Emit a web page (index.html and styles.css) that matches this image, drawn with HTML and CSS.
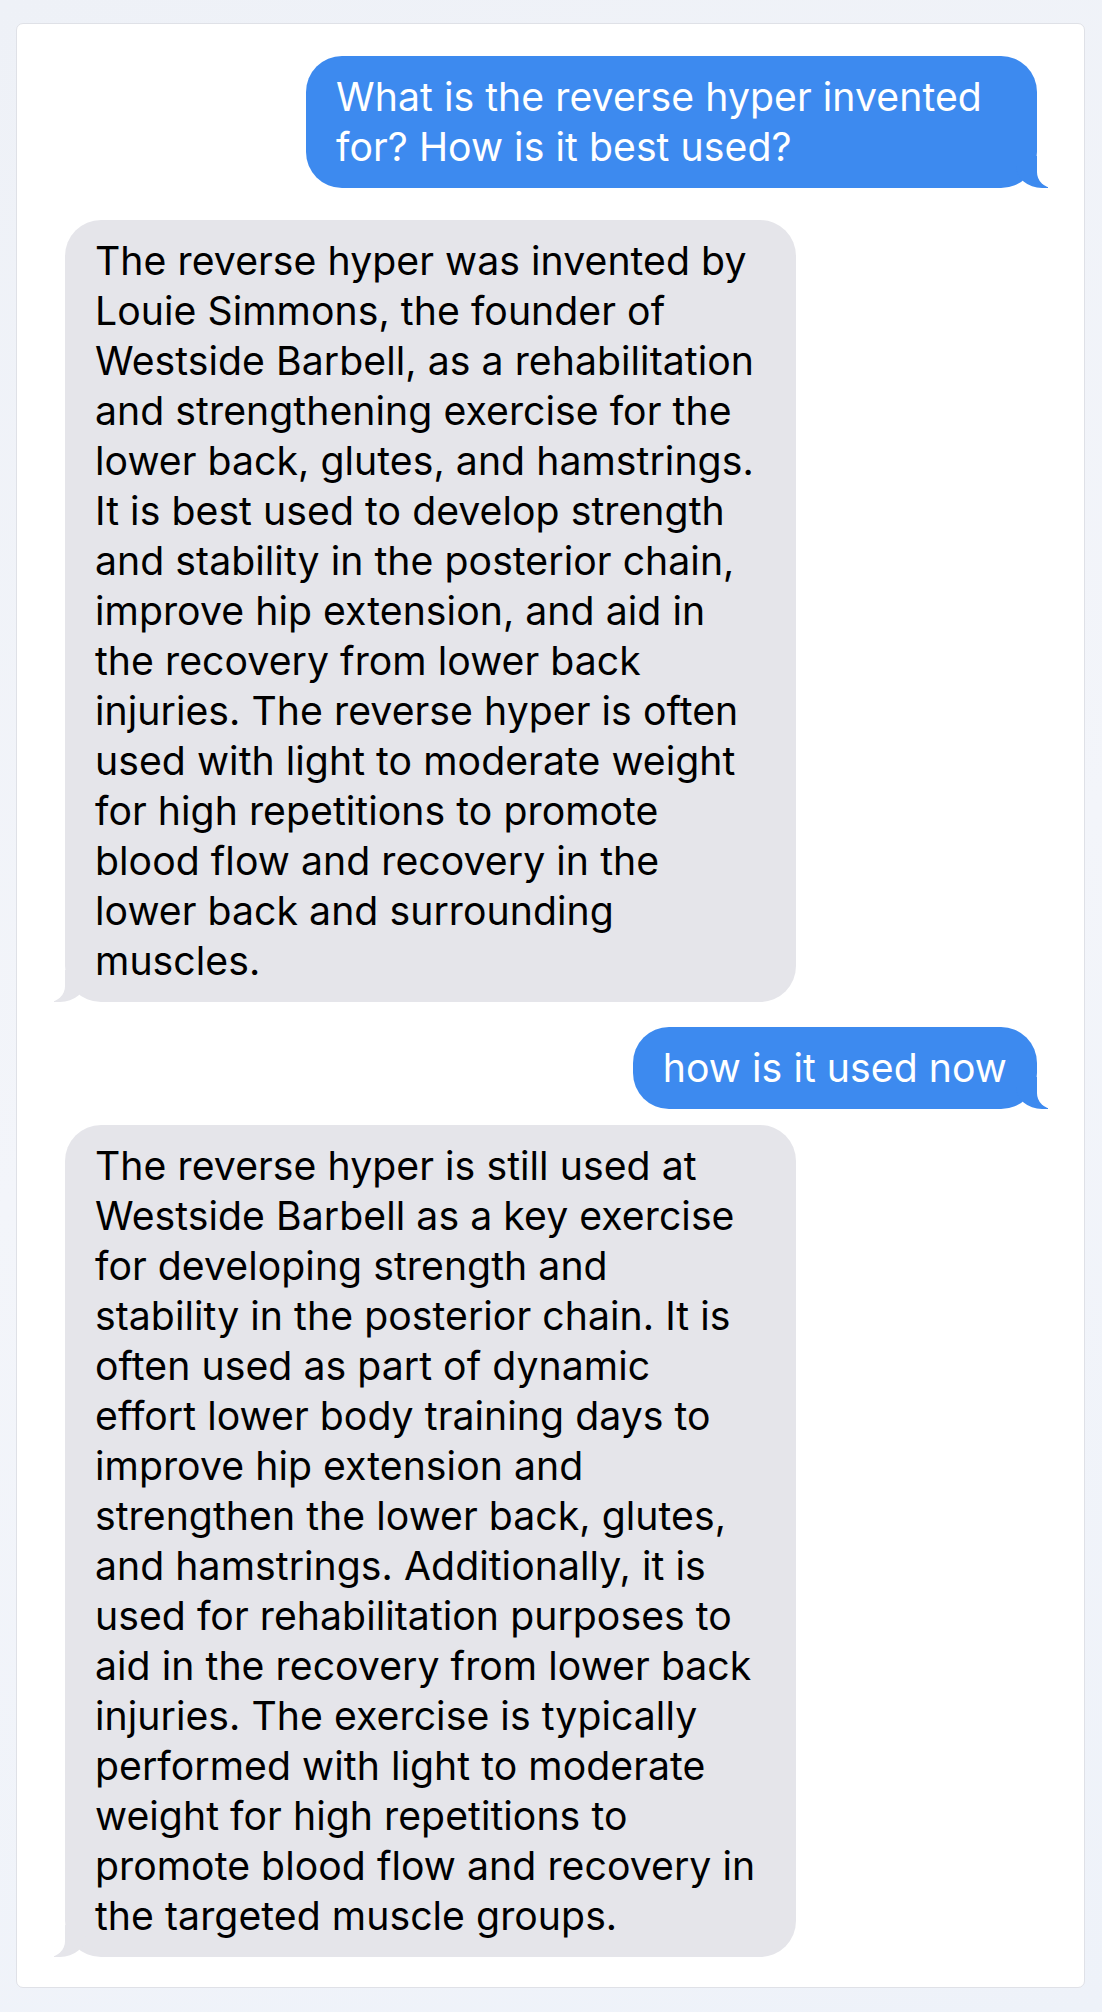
FILE: index.html
```html
<!DOCTYPE html>
<html lang="en">
<head>
<meta charset="utf-8">
<title>Chat</title>
<link rel="stylesheet" href="styles.css">
</head>
<body>
<div class="card">
  <div class="row row-me first">
    <div class="bubble me">What is the reverse hyper invented for? How is it best used?</div>
  </div>
  <div class="row row-them gap-a">
    <div class="bubble them">The reverse hyper was invented by Louie Simmons, the founder of Westside Barbell, as a rehabilitation and strengthening exercise for the lower back, glutes, and hamstrings. It is best used to develop strength and stability in the posterior chain, improve hip extension, and aid in the recovery from lower back injuries. The reverse hyper is often used with light to moderate weight for high repetitions to promote blood flow and recovery in the lower back and surrounding muscles.</div>
  </div>
  <div class="row row-me gap-b">
    <div class="bubble me">how is it used now</div>
  </div>
  <div class="row row-them gap-c">
    <div class="bubble them">The reverse hyper is still used at Westside Barbell as a key exercise for developing strength and stability in the posterior chain. It is often used as part of dynamic effort lower body training days to improve hip extension and strengthen the lower back, glutes, and hamstrings. Additionally, it is used for rehabilitation purposes to aid in the recovery from lower back injuries. The exercise is typically performed with light to moderate weight for high repetitions to promote blood flow and recovery in the targeted muscle groups.</div>
  </div>
</div>
</body>
</html>
```

FILE: styles.css
```css
html, body {
  margin: 0;
  padding: 0;
}
body {
  min-height: 2012px;
  background: linear-gradient(160deg, #eef1f7 0%, #f3f5fa 50%, #eef2f9 100%);
  font-family: Inter, "Noto Sans", sans-serif;
  padding: 23px 17px 0 16px;
  box-sizing: border-box;
}
.card {
  background: #ffffff;
  border: 1px solid #dfe1e7;
  border-radius: 7px;
  padding: 32px 47px 30px 48px;
  display: flex;
  flex-direction: column;
}
.row {
  display: flex;
}
.row-me {
  justify-content: flex-end;
}
.row-them {
  justify-content: flex-start;
}
.gap-a { margin-top: 32px; }
.gap-b { margin-top: 25px; }
.gap-c { margin-top: 16px; }
.bubble {
  position: relative;
  max-width: 731px;
  box-sizing: border-box;
  padding: 16px 30px;
  border-radius: 36px;
  font-size: 39.2px;
  line-height: 50px;
  letter-spacing: 0.05px;
}
.them {
  padding-right: 39px;
}
.me {
  background: #3d8aef;
  color: #ffffff;
}
.them {
  background: #e5e5ea;
  color: #000000;
}
.me::before {
  content: "";
  position: absolute;
  bottom: 0;
  right: -11px;
  width: 32px;
  height: 32px;
  background: #3d8aef;
  border-bottom-left-radius: 26px 22px;
}
.me::after {
  content: "";
  position: absolute;
  bottom: 0;
  right: -42px;
  width: 42px;
  height: 32px;
  background: #ffffff;
  border-bottom-left-radius: 16px;
}
.them::before {
  content: "";
  position: absolute;
  bottom: 0;
  left: -11px;
  width: 32px;
  height: 32px;
  background: #e5e5ea;
  border-bottom-right-radius: 26px 22px;
}
.them::after {
  content: "";
  position: absolute;
  bottom: 0;
  left: -42px;
  width: 42px;
  height: 32px;
  background: #ffffff;
  border-bottom-right-radius: 16px;
}
```
